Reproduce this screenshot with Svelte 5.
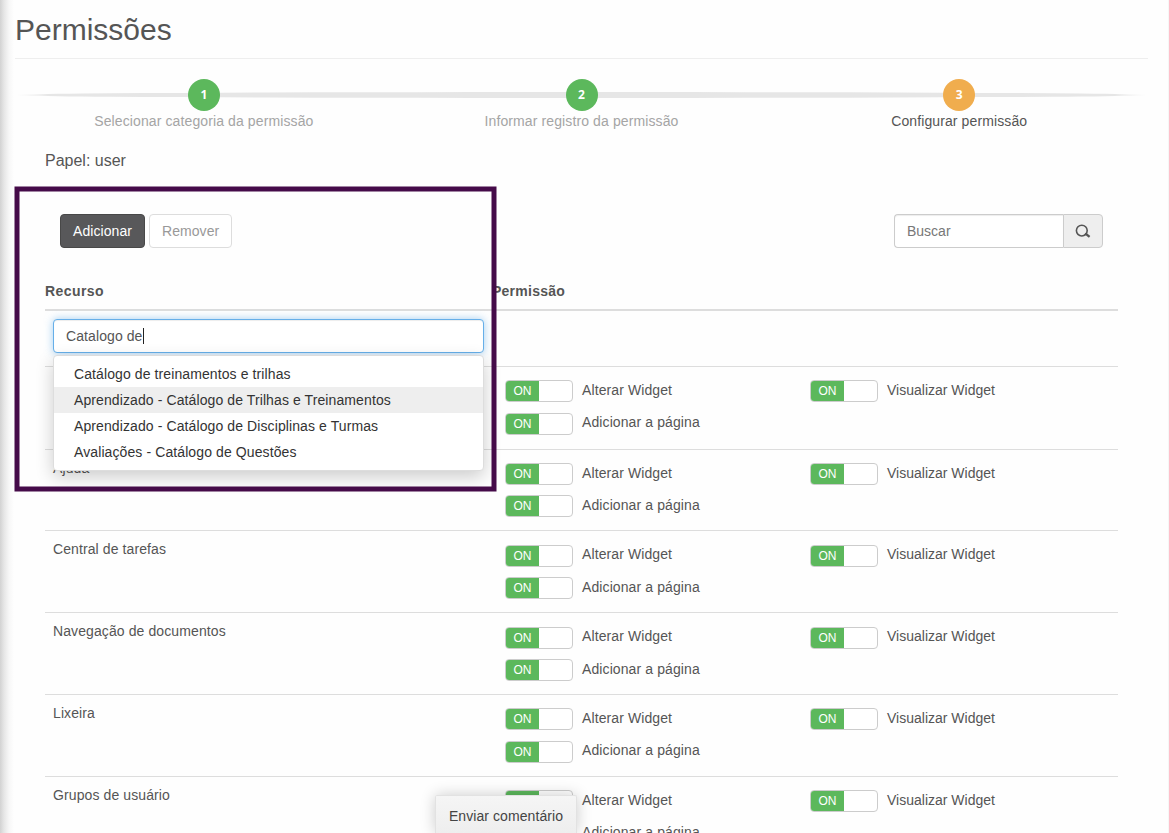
<script lang="ts">
  interface Step {
    label: string;
    state: 'done' | 'current';
  }

  const steps: Step[] = [
    { label: 'Selecionar categoria da permissão', state: 'done' },
    { label: 'Informar registro da permissão', state: 'done' },
    { label: 'Configurar permissão', state: 'current' }
  ];

  const suggestions = [
    'Catálogo de treinamentos e trilhas',
    'Aprendizado - Catálogo de Trilhas e Treinamentos',
    'Aprendizado - Catálogo de Disciplinas e Turmas',
    'Avaliações - Catálogo de Questões'
  ];

  const resources = ['', 'Ajuda', 'Central de tarefas', 'Navegação de documentos', 'Lixeira', 'Grupos de usuário'];
  const permissions = ['Alterar Widget', 'Visualizar Widget', 'Adicionar a página'];

  let active = $state(1);
  let query = $state('Catalogo de');
</script>

<div class="page">
  <h1>Permissões</h1>

  <div class="wizard">
    {#each steps as step, i}
      <div class="step {step.state}">
        <span class="number">{i + 1}</span>
        <span class="step-label">{step.label}</span>
      </div>
    {/each}
  </div>

  <div class="content">
    <div class="role">Papel: user</div>

    <div class="toolbar">
      <div class="buttons">
        <button class="btn primary">Adicionar</button>
        <button class="btn" disabled>Remover</button>
      </div>
      <div class="search">
        <input placeholder="Buscar" />
        <span class="addon">
          <svg width="16" height="16" viewBox="0 0 16 16">
            <circle cx="6.8" cy="7.6" r="5.4" fill="none" stroke="#555" stroke-width="1.6" />
            <path d="M9.8 11L11.4 11.4L14.6 13.9" fill="none" stroke="#555" stroke-width="2.3" />
          </svg>
        </span>
      </div>
    </div>

    <div class="table">
      <div class="head">
        <div class="resource-head">Recurso</div>
        <div class="permission-head">Permissão</div>
      </div>

      <div class="new-row">
        <div class="typeahead">
          <div class="field">{query}<span class="caret"></span></div>
          <ul class="menu">
            {#each suggestions as item, i}
              <li class:active={i === active}>{item}</li>
            {/each}
          </ul>
        </div>
      </div>

      {#each resources as resource}
        <div class="row">
          <div class="resource">{resource}</div>
          <div class="permissions">
            {#each permissions as permission}
              <div class="permission">
                <span class="switch"><span class="on">ON</span></span>
                <span class="permission-label">{permission}</span>
              </div>
            {/each}
          </div>
        </div>
      {/each}
    </div>
  </div>

  <svg class="highlight" width="483" height="306">
    <rect x="3" y="3" width="477" height="300" fill="none" stroke="#450b49" stroke-width="5" />
  </svg>

  <div class="feedback">Enviar comentário</div>
</div>

<style>
  :global(body) {
    margin: 0;
    overflow: hidden;
  }

  .page {
    position: relative;
    box-sizing: border-box;
    height: 833px;
    overflow: hidden;
    padding: 0 20px 0 15px;
    border-right: 1px solid #f6f6f6;
    background: linear-gradient(to right, #d2d2d2 0, #e6e6e6 4px, #f7f7f7 9px, #fefefe 14px, #fefefe 100%);
    color: #555;
    font-family: Arial, 'Liberation Sans', sans-serif;
    font-size: 14px;
    line-height: 20px;
  }

  h1 {
    margin: 0;
    padding: 13px 0 12px;
    border-bottom: 1px solid #eee;
    font-size: 30px;
    font-weight: 400;
    line-height: 33px;
  }

  .wizard {
    position: relative;
    display: flex;
    margin-top: 20px;
  }

  .wizard::before {
    content: '';
    position: absolute;
    top: 13px;
    left: 0;
    right: 0;
    height: 6px;
    border-radius: 50%;
    background: linear-gradient(to right, transparent, #e6e6e6 3%, #e6e6e6 97%, transparent);
  }

  .step {
    position: relative;
    flex: 1;
    display: flex;
    flex-direction: column;
    align-items: center;
    color: #a5a5a5;
  }

  .step-label {
    letter-spacing: 0.11px;
  }

  .number {
    width: 32px;
    height: 32px;
    border-radius: 50%;
    background: #5cb85c;
    color: #fff;
    font-family: 'Open Sans', sans-serif;
    font-size: 12px;
    font-weight: 700;
    line-height: 32px;
    text-align: center;
  }

  .current .number {
    background: #f0ad4e;
  }

  .current {
    color: #555;
  }

  .content {
    padding: 0 30px;
  }

  .role {
    margin-top: 20px;
    font-size: 16px;
  }

  .toolbar {
    display: flex;
    justify-content: space-between;
    padding: 43px 15px 0;
  }

  .buttons {
    display: flex;
    gap: 4px;
  }

  .btn {
    box-sizing: border-box;
    height: 34px;
    padding: 0 12px;
    border: 1px solid #ddd;
    border-radius: 4px;
    background: #fff;
    color: #999;
    font: inherit;
    letter-spacing: 0.07px;
  }

  .btn.primary {
    border-color: #484848;
    background: #58585a;
    color: #fff;
  }

  .search {
    display: flex;
    width: 209px;
    height: 34px;
  }

  .search input {
    box-sizing: border-box;
    flex: 1;
    min-width: 0;
    padding: 0 12px;
    border: 1px solid #ccc;
    border-right: 0;
    border-radius: 4px 0 0 4px;
    background: #fff;
    box-shadow: inset 0 1px 1px rgba(0, 0, 0, 0.075);
    font: inherit;
  }

  .search input::placeholder {
    color: #777;
  }

  .addon {
    box-sizing: border-box;
    display: flex;
    align-items: center;
    justify-content: center;
    width: 40px;
    border: 1px solid #ccc;
    border-radius: 0 4px 4px 0;
    background: #eee;
  }

  .table {
    margin-top: 33px;
  }

  .head {
    display: flex;
    height: 28px;
    border-bottom: 2px solid #ddd;
    font-weight: 700;
  }

  .resource-head {
    width: 447px;
    letter-spacing: 0.42px;
  }

  .permission-head {
    letter-spacing: 0.25px;
  }

  .new-row {
    box-sizing: border-box;
    height: 55.25px;
    padding: 8px;
  }

  .typeahead {
    position: relative;
    width: 431px;
  }

  .field {
    box-sizing: border-box;
    display: flex;
    align-items: center;
    height: 34px;
    padding: 0 12px;
    border: 1px solid #66afe9;
    border-radius: 4px;
    background: #fff;
    box-shadow: inset 0 1px 1px rgba(0, 0, 0, 0.075), 0 0 8px rgba(102, 175, 233, 0.6);
    letter-spacing: 0.09px;
  }

  .caret {
    width: 1px;
    height: 16px;
    background: #222;
  }

  .menu {
    position: absolute;
    z-index: 2;
    top: 36px;
    left: 0;
    right: 0;
    margin: 0;
    padding: 5px 0;
    border: 1px solid #ddd;
    border-radius: 4px;
    background: #fff;
    box-shadow: 0 6px 18px rgba(0, 0, 0, 0.2);
    color: #333;
    letter-spacing: 0.1px;
    list-style: none;
  }

  .menu li {
    padding: 3px 20px;
  }

  .menu li.active {
    background: #eee;
  }

  .row {
    box-sizing: border-box;
    display: flex;
    height: 81.85px;
    border-top: 1px solid #ddd;
  }

  .new-row + .row {
    height: 82.4px;
  }

  .resource {
    box-sizing: border-box;
    width: 460px;
    padding: 8px;
    letter-spacing: 0.1px;
  }

  .permissions {
    display: grid;
    grid-template-columns: 305px 305px;
    grid-auto-rows: 32.3px;
    padding-top: 13.2px;
  }

  .permission {
    display: flex;
    align-items: flex-start;
    gap: 9px;
  }

  .permission-label {
    margin-top: -0.3px;
    letter-spacing: 0.1px;
  }

  .permission:nth-child(2) .permission-label {
    letter-spacing: 0;
  }

  .switch {
    box-sizing: border-box;
    width: 68px;
    height: 22px;
    overflow: hidden;
    border: 1px solid #ccc;
    border-radius: 4px;
    background: #fff;
  }

  .on {
    display: block;
    width: 33px;
    height: 20px;
    background: #5cb85c;
    color: #fff;
    font-size: 12px;
    text-align: center;
  }

  .highlight {
    position: absolute;
    z-index: 3;
    top: 186px;
    left: 14px;
  }

  .feedback {
    position: absolute;
    z-index: 4;
    left: 435px;
    bottom: 0;
    box-sizing: border-box;
    width: 142px;
    height: 38px;
    padding-top: 10px;
    border: 1px solid #e2e2e2;
    border-bottom: 0;
    border-radius: 2px 2px 0 0;
    background: linear-gradient(#f5f5f5, #eee);
    box-shadow: 0 0 15px rgba(0, 0, 0, 0.2);
    color: #444;
    letter-spacing: 0.08px;
    text-align: center;
  }
</style>
